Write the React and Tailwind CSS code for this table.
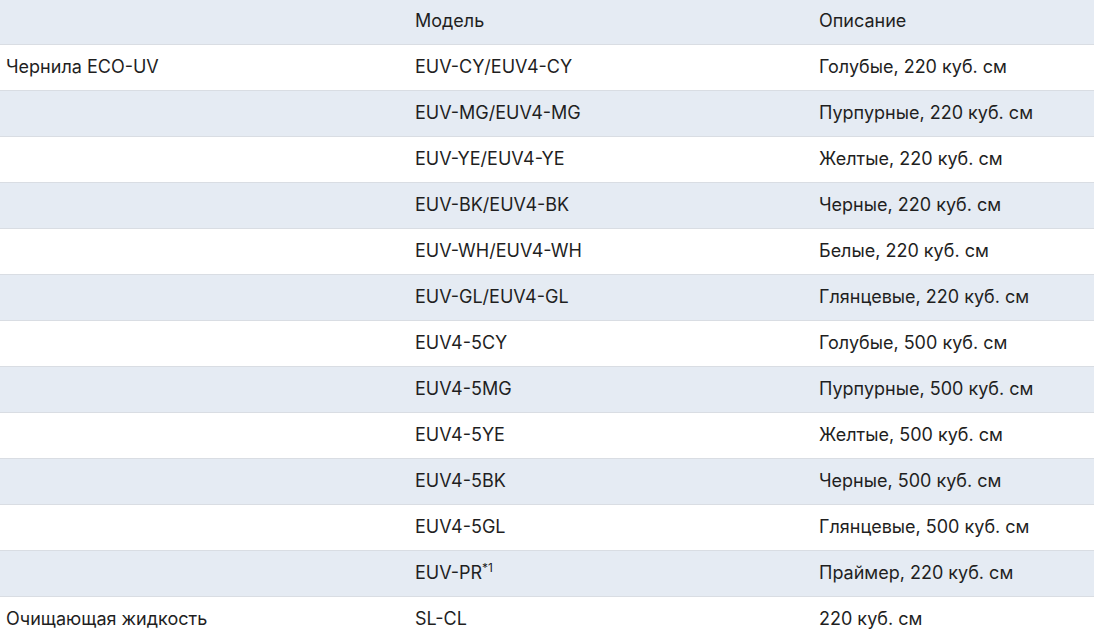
import React from "react";

const rows = [
  ["Чернила ECO-UV", "EUV-CY/EUV4-CY", "Голубые, 220 куб. см"],
  ["", "EUV-MG/EUV4-MG", "Пурпурные, 220 куб. см"],
  ["", "EUV-YE/EUV4-YE", "Желтые, 220 куб. см"],
  ["", "EUV-BK/EUV4-BK", "Черные, 220 куб. см"],
  ["", "EUV-WH/EUV4-WH", "Белые, 220 куб. см"],
  ["", "EUV-GL/EUV4-GL", "Глянцевые, 220 куб. см"],
  ["", "EUV4-5CY", "Голубые, 500 куб. см"],
  ["", "EUV4-5MG", "Пурпурные, 500 куб. см"],
  ["", "EUV4-5YE", "Желтые, 500 куб. см"],
  ["", "EUV4-5BK", "Черные, 500 куб. см"],
  ["", "EUV4-5GL", "Глянцевые, 500 куб. см"],
  ["", "EUV-PR", "Праймер, 220 куб. см"],
  ["Очищающая жидкость", "SL-CL", "220 куб. см"],
];

function Row({ a, b, c, shaded, header }) {
  return (
    <div
      className={
        "grid grid-cols-[409px_404px_1fr] border-b border-[#d9dde3] " +
        (header ? "h-[45px] " : "h-[46px] ") +
        (shaded ? "bg-[#e5ebf3]" : "bg-white")
      }
    >
      <div className="flex items-center px-[6px] pb-[3px]">{a}</div>
      <div className="flex items-center px-[6px] pb-[3px]">
        {b === "EUV-PR" ? (
          <span>
            EUV-PR<sup className="text-[12px] top-[-0.55em]">*1</sup>
          </span>
        ) : (
          b
        )}
      </div>
      <div className="flex items-center px-[6px] pb-[3px]">{c}</div>
    </div>
  );
}

export default function App() {
  return (
    <div className="w-[1094px] h-[638px] overflow-hidden bg-white text-[18px] text-[#1f1f1f] font-['Inter',sans-serif]">
      <Row header shaded a="" b="Модель" c="Описание" />
      {rows.map((r, i) => (
        <Row key={i} a={r[0]} b={r[1]} c={r[2]} shaded={i % 2 === 1} />
      ))}
    </div>
  );
}
